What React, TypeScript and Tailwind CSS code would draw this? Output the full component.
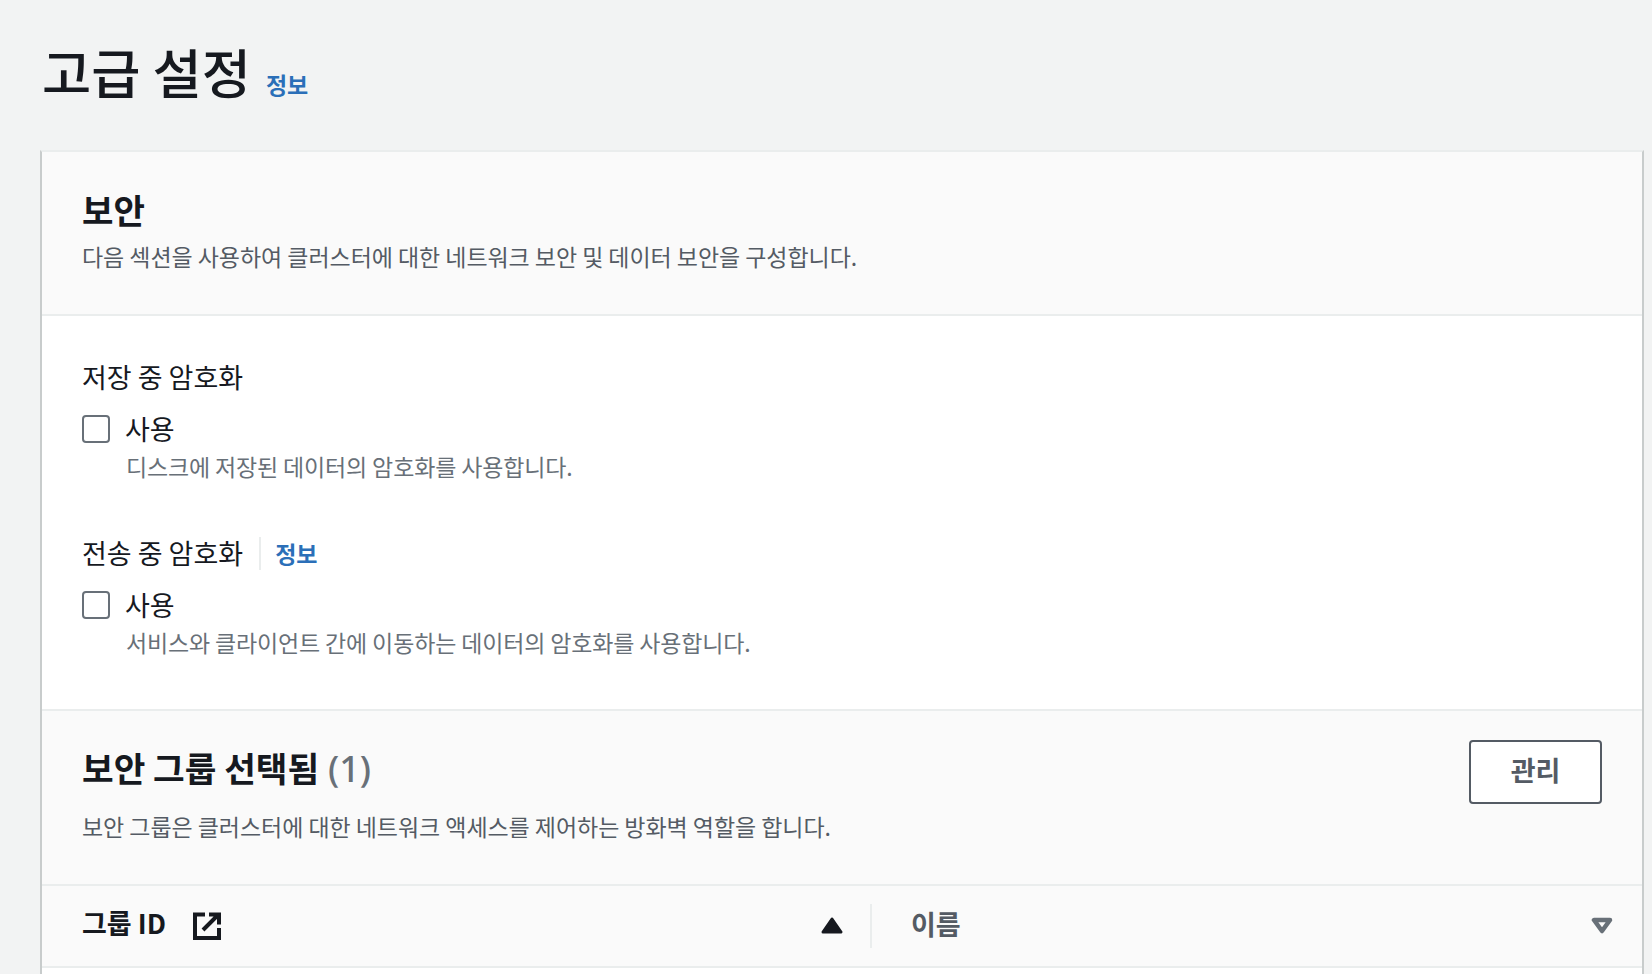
import React from 'react';

const font = { fontFamily: '"Noto Sans CJK KR", "Noto Sans", sans-serif' };

const CheckRow = ({ description }: { description: string }) => (
  <div className="mt-[16px]">
    <div className="flex items-center gap-[16px] h-[36px]">
      <span className="w-[28px] h-[28px] rounded-[4px] border-2 border-[#687078] bg-white" />
      <span className="text-[27px] leading-[36px] text-[#16191f] -mt-[1px] -ml-[1px]">사용</span>
    </div>
    <p className="ml-[44px] mt-[1px] text-[23px] leading-[36px] text-[#687078] tracking-[-0.15px]">{description}</p>
  </div>
);

const App = () => {
  return (
    <div className="w-[1652px] h-[974px] overflow-hidden bg-[#f2f3f3] pl-[40px] pr-[8px]" style={font}>
      {/* Page title */}
      <div className="h-[150px] flex items-start pt-[35px] pl-[2px]">
        <h1 className="text-[53.500px] leading-[72px] font-medium text-[#16191f]">고급 설정</h1>
        <a className="ml-[15px] mt-[31px] text-[23px] leading-[36px] font-bold text-[#2b6fb8]">정보</a>
      </div>

      <div className="bg-white border-l-2 border-r-2 border-t-2 border-[#c8cccc] border-t-[#eaeded] h-[900px]">
        {/* Security header */}
        <div className="h-[164px] bg-[#fafafa] border-b-2 border-[#eaeded] pl-[40px] pt-[31px]">
          <h2 className="text-[34.200px] leading-[52px] font-bold text-[#16191f]">보안</h2>
          <p className="mt-[3px] text-[23px] leading-[36px] text-[#545b64] tracking-[-0.05px]">
            다음 섹션을 사용하여 클러스터에 대한 네트워크 보안 및 데이터 보안을 구성합니다.
          </p>
        </div>

        {/* Encryption options */}
        <div className="h-[393px] pl-[40px] pt-[43px]">
          <div className="text-[27px] leading-[36px] text-[#16191f]">저장 중 암호화</div>
          <CheckRow description="디스크에 저장된 데이터의 암호화를 사용합니다." />
          <div className="mt-[51px] flex items-center h-[36px]">
            <span className="text-[27px] leading-[36px] text-[#16191f]">전송 중 암호화</span>
            <span className="ml-[16px] w-[2px] h-[33px] bg-[#eaeded]" />
            <a className="ml-[14px] text-[23px] leading-[36px] font-bold text-[#2b6fb8]">정보</a>
          </div>
          <CheckRow description="서비스와 클라이언트 간에 이동하는 데이터의 암호화를 사용합니다." />
        </div>

        {/* Security groups */}
        <div className="bg-[#fafafa] border-t-2 border-[#eaeded]">
          <div className="h-[175px] border-b-2 border-[#eaeded] pl-[40px] pr-[40px] pt-[30px] flex justify-between items-start">
            <div>
              <h2 className="text-[34.400px] leading-[52px] font-bold text-[#16191f]">
                보안 그룹 선택됨{' '}
                <span className="ml-[1px] text-[36px] font-medium text-[#687078]" style={{ fontFamily: '"Noto Sans", sans-serif' }}>(1)</span>
              </h2>
              <p className="mt-[13px] text-[23px] leading-[36px] text-[#545b64] tracking-[-0.05px]">
                보안 그룹은 클러스터에 대한 네트워크 액세스를 제어하는 방화벽 역할을 합니다.
              </p>
            </div>
            <button className="w-[133px] h-[64px] -mt-[1px] pb-[4px] bg-white border-2 border-[#545b64] rounded-[4px] text-[27px] font-bold text-[#545b64]">
              관리
            </button>
          </div>

          {/* Table header */}
          <div className="h-[82px] border-b-2 border-[#eaeded] flex items-center pl-[40px] pr-[29px]">
            <div className="flex items-center w-[761px]">
              <span className="text-[27px] font-bold text-[#16191f] -mt-[5px]">그룹 ID</span>
              <svg className="ml-[27px]" width="28" height="28" viewBox="0 0 28 28" fill="none" stroke="#16191f" strokeWidth="4">
                <path d="M12 2.500H2v23.500h24V16" />
                <path d="M10 18 25 3M16 2.500h10v10" />
              </svg>
              <svg className="ml-auto -mt-[1px]" width="22" height="17" viewBox="0 0 22 17">
                <path d="M11 2 20 15H2Z" fill="#16191f" stroke="#16191f" strokeWidth="3" strokeLinejoin="round" />
              </svg>
            </div>
            <span className="ml-[27px] w-[2px] h-[44px] bg-[#eaeded]" />
            <span className="ml-[39px] text-[27px] font-bold text-[#545b64] -mt-[3px]">이름</span>
            <svg className="ml-auto" width="22" height="18" viewBox="0 0 22 18">
              <path d="M3 3H19L11 14Z" fill="none" stroke="#687078" strokeWidth="4.500" strokeLinejoin="round" />
            </svg>
          </div>
        </div>
      </div>
    </div>
  );
};

export default App;
